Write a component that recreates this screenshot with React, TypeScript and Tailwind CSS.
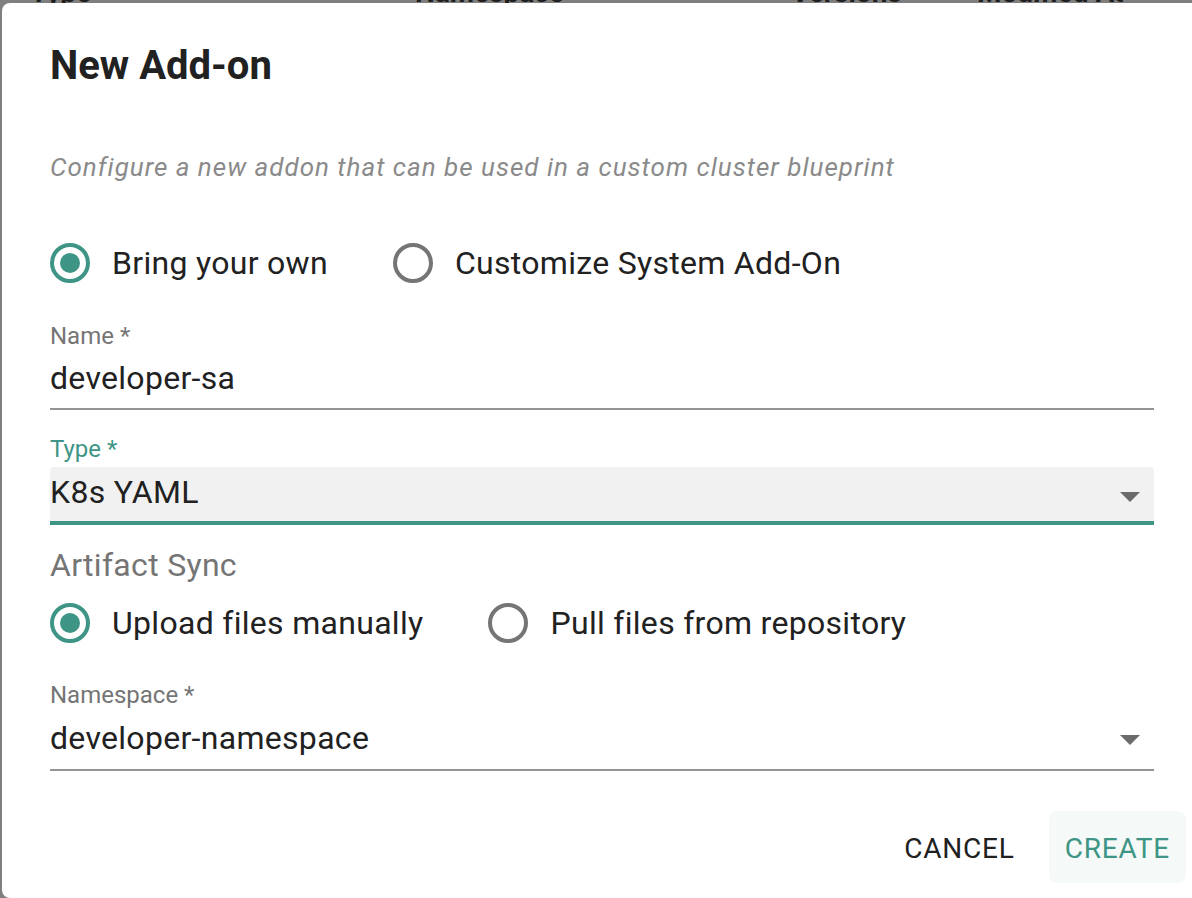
import { useState } from 'react'

const TEAL = '#3e9585'

interface RadioOptionProps {
   label: string
   checked: boolean
   onSelect: () => void
}

const RadioOption: React.FC<RadioOptionProps> = ({ label, checked, onSelect }) => (
   <button type="button" onClick={onSelect} className="flex items-center gap-[22px] h-[40px]">
      <span
         className={`w-[40px] h-[40px] rounded-full border-[4px] flex items-center justify-center ${
            checked ? 'border-[#3e9585]' : 'border-[#757575]'
         }`}
      >
         {checked && <span className="w-[20px] h-[20px] rounded-full bg-[#3e9585]" />}
      </span>
      <span className="text-[32px] leading-[40px] tracking-[0.3px] text-[#212121]">{label}</span>
   </button>
)

const ArrowDrop = () => (
   <svg width="20" height="10" viewBox="0 0 20 10" className="shrink-0">
      <path d="M0 0 L10 10 L20 0 Z" fill="#6b6b6b" />
   </svg>
)

export default function App() {
   const [source, setSource] = useState<'own' | 'system'>('own')
   const [sync, setSync] = useState<'manual' | 'repo'>('manual')
   const [name, setName] = useState('developer-sa')

   return (
      <div
         className="w-[1192px] h-[898px] overflow-hidden bg-[#7f7f7f] flex flex-col"
         style={{ fontFamily: 'Roboto, "Liberation Sans", sans-serif' }}
      >
         {/* table header peeking from behind the overlay */}
         <div className="h-[3px] shrink-0 overflow-hidden">
            <div className="h-[40px] -mt-[33px] flex items-end text-[28px] leading-none font-bold text-[#1f1f1f]">
               <span className="ml-[30px] w-[385px]">Type</span>
               <span className="w-[376px]">Namespace</span>
               <span className="w-[186px]">Versions</span>
               <span>Modified At</span>
            </div>
         </div>

         <div className="ml-[2px] w-[1200px] flex-1 bg-white rounded-[8px] flex flex-col">
            <div className="px-[48px] pt-[31px]">
               <h2 className="text-[40px] leading-[64px] font-bold text-[#212121]">New Add-on</h2>
            </div>

            <div className="px-[48px] flex flex-col">
               <p className="mt-[49px] text-[26px] leading-[40px] italic tracking-[1px] text-[#8a8a8a]">
                  Configure a new addon that can be used in a custom cluster blueprint
               </p>

               <div className="mt-[56px] flex items-center gap-[65px]">
                  <RadioOption label="Bring your own" checked={source === 'own'} onSelect={() => setSource('own')} />
                  <RadioOption
                     label="Customize System Add-On"
                     checked={source === 'system'}
                     onSelect={() => setSource('system')}
                  />
               </div>

               {/* Name */}
               <label className="mt-[38px] text-[24px] leading-[30px] text-[#757575]">Name *</label>
               <div className="mt-[7px] border-b-2 border-[#949494] pb-[10px]">
                  <input
                     value={name}
                     onChange={(e) => setName(e.target.value)}
                     className="w-full h-[40px] text-[32px] leading-[40px] tracking-[0.3px] text-[#212121] outline-none bg-transparent"
                  />
               </div>

               {/* Type */}
               <label className="mt-[24px] text-[24px] leading-[30px]" style={{ color: TEAL }}>
                  Type *
               </label>
               <div className="mt-[3px] bg-[#f1f1f1] rounded-t-[4px] border-b-4 border-[#3e9585] h-[58px] flex items-start pt-[5px] pr-[14px]">
                  <span className="flex-1 text-[32px] leading-[40px] tracking-[0.3px] text-[#212121]">K8s YAML</span>
                  <span className="mt-[20px]">
                     <ArrowDrop />
                  </span>
               </div>

               {/* Artifact sync */}
               <p className="mt-[20px] text-[32px] leading-[40px] tracking-[0.3px] text-[#757575]">Artifact Sync</p>
               <div className="mt-[18px] flex items-center gap-[65px]">
                  <RadioOption
                     label="Upload files manually"
                     checked={sync === 'manual'}
                     onSelect={() => setSync('manual')}
                  />
                  <RadioOption
                     label="Pull files from repository"
                     checked={sync === 'repo'}
                     onSelect={() => setSync('repo')}
                  />
               </div>

               {/* Namespace */}
               <label className="mt-[37px] text-[24px] leading-[30px] text-[#757575]">Namespace *</label>
               <div className="mt-[8px] border-b-2 border-[#949494] pb-[11px] flex items-center pr-[14px]">
                  <span className="flex-1 text-[32px] leading-[40px] tracking-[0.3px] text-[#212121]">
                     developer-namespace
                  </span>
                  <span className="mt-[4px]">
                     <ArrowDrop />
                  </span>
               </div>
            </div>

            <div className="mt-[40px] pr-[16px] flex justify-end gap-[18px]">
               <button
                  type="button"
                  className="h-[72px] px-[16px] pt-[3px] rounded-[8px] text-[28px] tracking-[0.8px] text-[#212121]"
               >
                  CANCEL
               </button>
               <button
                  type="button"
                  className="h-[72px] px-[16px] pt-[3px] rounded-[8px] text-[28px] tracking-[0.8px] bg-[#f5f9f8]"
                  style={{ color: TEAL }}
               >
                  CREATE
               </button>
            </div>
         </div>
      </div>
   )
}
